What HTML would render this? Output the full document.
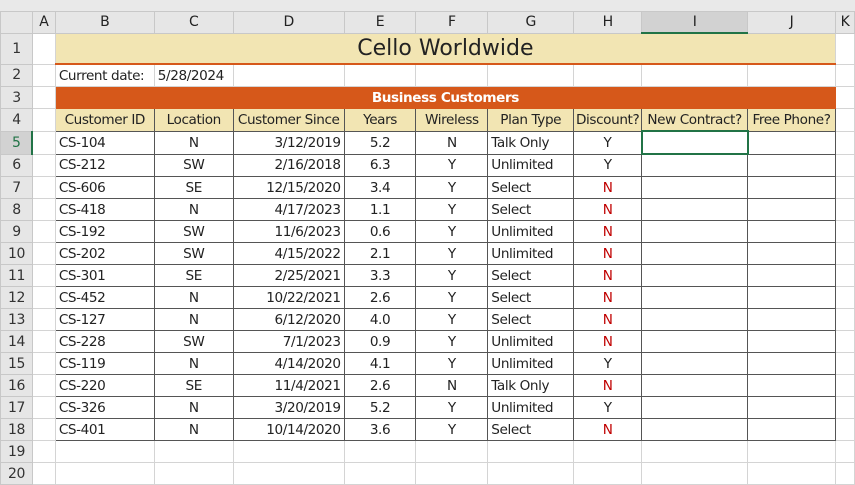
<!DOCTYPE html><html><head><style>
body{margin:0;width:855px;height:484px;overflow:hidden;background:#fff;font-family:"DejaVu Sans","Liberation Sans",sans-serif;}
.top{position:absolute;left:0;top:0;width:855px;height:11px;background:#e9e9e9}
table{position:absolute;left:0;top:11px;border-collapse:collapse;table-layout:fixed;font-size:13.6px;color:#222;letter-spacing:-0.4px}
td{border:1px solid #d4d4d4;padding:0 3px;height:21px;white-space:nowrap;overflow:hidden}
td.h{background:#e6e6e6;color:#333;text-align:center;border-color:#c8c8c8;font-size:14px;padding:0}
tr.ch td{height:20px;background:#e6e6e6;border-color:#c8c8c8;text-align:center;padding:0;font-size:14px}
.d{border:1px solid #555}
.c{text-align:center}.r{text-align:right}
.red{color:#c00000}
.hd td.d{background:#f2e5b3;text-align:center;padding:0}
</style></head><body>
<div class="top"></div>
<div style="position:absolute;left:2px;top:11px;width:1px;height:473px;background:#217346"></div>
<table>
<colgroup><col style="width:32px"><col style="width:23px"><col style="width:99px"><col style="width:79px"><col style="width:111px"><col style="width:72px"><col style="width:72px"><col style="width:86px"><col style="width:68px"><col style="width:106px"><col style="width:88px"><col style="width:19px"></colgroup>
<tr class="ch"><td></td><td>A</td><td>B</td><td>C</td><td>D</td><td>E</td><td>F</td><td>G</td><td>H</td><td style="background:#d2d2d2;border-bottom:2px solid #217346">I</td><td>J</td><td>K</td></tr>
<tr><td class="h" style="height:30px">1</td><td></td><td colspan="9" style="background:#f2e5b3;border-bottom:2px solid #d6581a;text-align:center;font-size:22px;letter-spacing:0;color:#222">Cello Worldwide</td><td></td></tr>
<tr><td class="h">2</td><td></td><td>Current date:</td><td>5/28/2024</td><td></td><td></td><td></td><td></td><td></td><td></td><td></td><td></td></tr>
<tr><td class="h">3</td><td></td><td colspan="9" style="background:#d6581a;color:#fff;font-weight:bold;text-align:center;border-color:#d6581a">Business Customers</td><td></td></tr>
<tr class="hd"><td class="h">4</td><td></td><td class="d">Customer ID</td><td class="d">Location</td><td class="d">Customer Since</td><td class="d">Years</td><td class="d">Wireless</td><td class="d">Plan Type</td><td class="d">Discount?</td><td class="d">New Contract?</td><td class="d">Free Phone?</td><td></td></tr>
<tr><td class="h" style="background:#d2d2d2;color:#217346;border-right:2px solid #217346">5</td><td></td><td class="d">CS-104</td><td class="d c">N</td><td class="d r">3/12/2019</td><td class="d c">5.2</td><td class="d c">N</td><td class="d">Talk Only</td><td class="d c">Y</td><td class="d" style="border:2px solid #217346"></td><td class="d"></td><td></td></tr>
<tr><td class="h">6</td><td></td><td class="d">CS-212</td><td class="d c">SW</td><td class="d r">2/16/2018</td><td class="d c">6.3</td><td class="d c">Y</td><td class="d">Unlimited</td><td class="d c">Y</td><td class="d"></td><td class="d"></td><td></td></tr>
<tr><td class="h">7</td><td></td><td class="d">CS-606</td><td class="d c">SE</td><td class="d r">12/15/2020</td><td class="d c">3.4</td><td class="d c">Y</td><td class="d">Select</td><td class="d c red">N</td><td class="d"></td><td class="d"></td><td></td></tr>
<tr><td class="h">8</td><td></td><td class="d">CS-418</td><td class="d c">N</td><td class="d r">4/17/2023</td><td class="d c">1.1</td><td class="d c">Y</td><td class="d">Select</td><td class="d c red">N</td><td class="d"></td><td class="d"></td><td></td></tr>
<tr><td class="h">9</td><td></td><td class="d">CS-192</td><td class="d c">SW</td><td class="d r">11/6/2023</td><td class="d c">0.6</td><td class="d c">Y</td><td class="d">Unlimited</td><td class="d c red">N</td><td class="d"></td><td class="d"></td><td></td></tr>
<tr><td class="h">10</td><td></td><td class="d">CS-202</td><td class="d c">SW</td><td class="d r">4/15/2022</td><td class="d c">2.1</td><td class="d c">Y</td><td class="d">Unlimited</td><td class="d c red">N</td><td class="d"></td><td class="d"></td><td></td></tr>
<tr><td class="h">11</td><td></td><td class="d">CS-301</td><td class="d c">SE</td><td class="d r">2/25/2021</td><td class="d c">3.3</td><td class="d c">Y</td><td class="d">Select</td><td class="d c red">N</td><td class="d"></td><td class="d"></td><td></td></tr>
<tr><td class="h">12</td><td></td><td class="d">CS-452</td><td class="d c">N</td><td class="d r">10/22/2021</td><td class="d c">2.6</td><td class="d c">Y</td><td class="d">Select</td><td class="d c red">N</td><td class="d"></td><td class="d"></td><td></td></tr>
<tr><td class="h">13</td><td></td><td class="d">CS-127</td><td class="d c">N</td><td class="d r">6/12/2020</td><td class="d c">4.0</td><td class="d c">Y</td><td class="d">Select</td><td class="d c red">N</td><td class="d"></td><td class="d"></td><td></td></tr>
<tr><td class="h">14</td><td></td><td class="d">CS-228</td><td class="d c">SW</td><td class="d r">7/1/2023</td><td class="d c">0.9</td><td class="d c">Y</td><td class="d">Unlimited</td><td class="d c red">N</td><td class="d"></td><td class="d"></td><td></td></tr>
<tr><td class="h">15</td><td></td><td class="d">CS-119</td><td class="d c">N</td><td class="d r">4/14/2020</td><td class="d c">4.1</td><td class="d c">Y</td><td class="d">Unlimited</td><td class="d c">Y</td><td class="d"></td><td class="d"></td><td></td></tr>
<tr><td class="h">16</td><td></td><td class="d">CS-220</td><td class="d c">SE</td><td class="d r">11/4/2021</td><td class="d c">2.6</td><td class="d c">N</td><td class="d">Talk Only</td><td class="d c red">N</td><td class="d"></td><td class="d"></td><td></td></tr>
<tr><td class="h">17</td><td></td><td class="d">CS-326</td><td class="d c">N</td><td class="d r">3/20/2019</td><td class="d c">5.2</td><td class="d c">Y</td><td class="d">Unlimited</td><td class="d c">Y</td><td class="d"></td><td class="d"></td><td></td></tr>
<tr><td class="h">18</td><td></td><td class="d">CS-401</td><td class="d c">N</td><td class="d r">10/14/2020</td><td class="d c">3.6</td><td class="d c">Y</td><td class="d">Select</td><td class="d c red">N</td><td class="d"></td><td class="d"></td><td></td></tr>
<tr><td class="h">19</td><td></td><td></td><td></td><td></td><td></td><td></td><td></td><td></td><td></td><td></td><td></td></tr>
<tr><td class="h">20</td><td></td><td></td><td></td><td></td><td></td><td></td><td></td><td></td><td></td><td></td><td></td></tr>
</table>
</body></html>
